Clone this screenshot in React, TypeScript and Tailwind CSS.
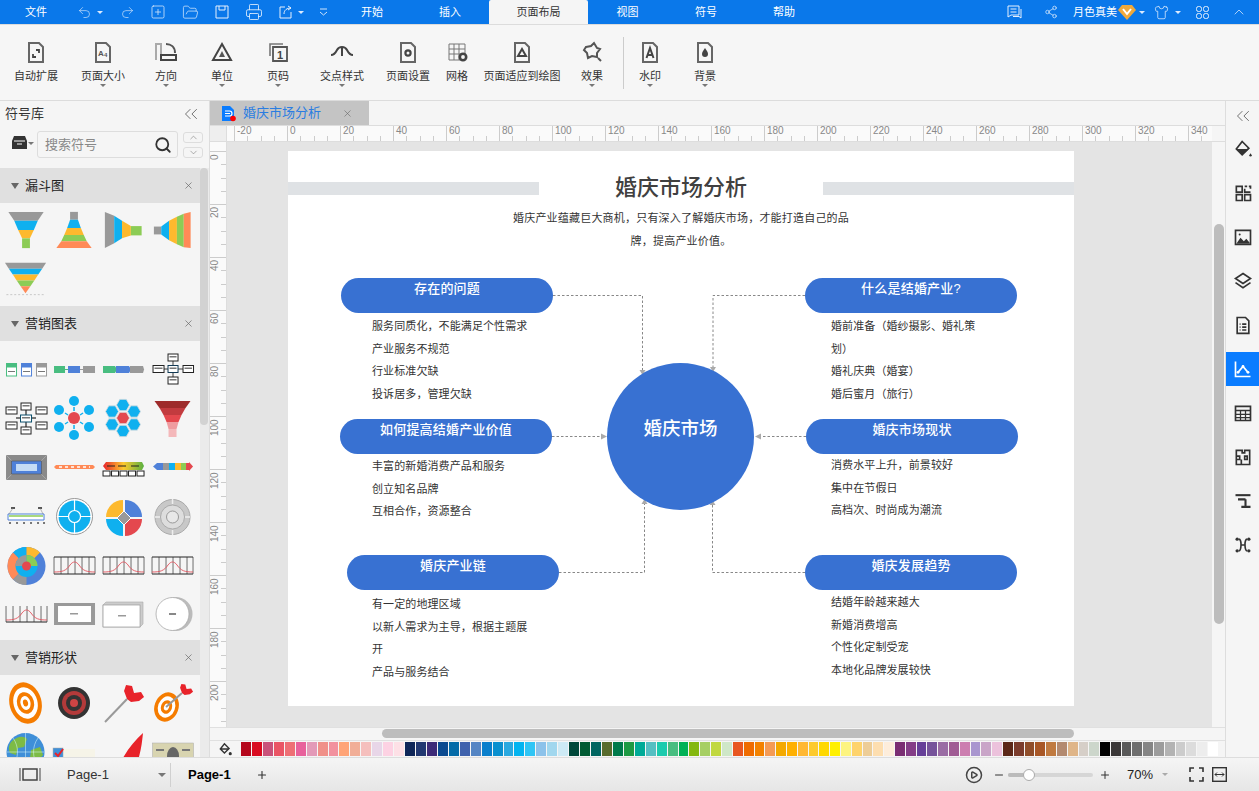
import { Fragment, type ReactNode } from "react";
import { ChevronDown, ChevronUp, ChevronsLeft, CirclePlay, FolderOpen, Minus, Plus, Printer, Redo2, Search, Share2, Shirt, SquarePlus, Undo2, X } from "lucide-react";

const swatches = [
  "bg-[#b5071c]", "bg-[#d90b20]", "bg-[#c9527a]", "bg-[#ea5565]", "bg-[#ee6f75]", "bg-[#e8619c]", "bg-[#e39ab8]", "bg-[#f09089]", "bg-[#f2919e]", "bg-[#ffa477]", "bg-[#f1ae97]", "bg-[#f5bfbd]", "bg-[#e8d6e8]", "bg-[#fdd2e3]", "bg-[#fde0e6]",
  "bg-[#0f2658]", "bg-[#223871]", "bg-[#3d2b78]", "bg-[#0b4a90]", "bg-[#046ba8]", "bg-[#3f62ad]", "bg-[#5585c4]", "bg-[#0a7fcc]", "bg-[#0a90cf]", "bg-[#2aa9e0]", "bg-[#03b4f0]", "bg-[#2fc5f5]", "bg-[#8cc2ea]", "bg-[#a1d7ee]", "bg-[#cdeaf5]",
  "bg-[#00483a]", "bg-[#005a33]", "bg-[#006560]", "bg-[#586b2d]", "bg-[#007a4b]", "bg-[#1e9a44]", "bg-[#00ab97]", "bg-[#55bfc2]", "bg-[#1ccbae]", "bg-[#48bd80]", "bg-[#00b156]", "bg-[#84b80f]", "bg-[#a6cf63]", "bg-[#c1d840]", "bg-[#cfe7c8]",
  "bg-[#e85721]", "bg-[#ef6c00]", "bg-[#f38200]", "bg-[#f49b55]", "bg-[#f4a900]", "bg-[#ffb000]", "bg-[#ffb833]", "bg-[#fdca2d]", "bg-[#ffd800]", "bg-[#fff000]", "bg-[#fdf480]", "bg-[#fed36c]", "bg-[#edcd97]", "bg-[#fddeb0]", "bg-[#fdeddb]",
  "bg-[#7a2e73]", "bg-[#843d87]", "bg-[#663f98]", "bg-[#76539a]", "bg-[#9a6ca4]", "bg-[#a05c94]", "bg-[#cc7eb0]", "bg-[#a996cf]", "bg-[#c9a5c8]", "bg-[#ecc2dc]",
  "bg-[#5c2818]", "bg-[#7b3c2c]", "bg-[#904e2a]", "bg-[#a85726]", "bg-[#c07a40]", "bg-[#b38a70]", "bg-[#dfb588]", "bg-[#d6cfc8]", "bg-[#ccd6cb]",
  "bg-[#000000]", "bg-[#3b3838]", "bg-[#595959]", "bg-[#6e6e6e]", "bg-[#858585]", "bg-[#9c9c9c]", "bg-[#b3b3b3]", "bg-[#cccccc]", "bg-[#dcdcdc]", "bg-[#ededed]", "bg-[#ffffff]",
];

const Caret = ({ className = "border-t-[#777]" }: { className?: string }) => (
  <span className={`block w-0 h-0 border-x-[3px] border-x-transparent border-t-[3px] ${className}`} />
);

/* ---------- ribbon icons ---------- */
const Ico = ({ children }: { children: ReactNode }) => (
  <svg width="24" height="24" viewBox="0 0 24 24" fill="none" stroke="#666" strokeWidth="2">{children}</svg>
);
const DOC = "M5 4h10l4 4v15H5z";

const ribbon: { label: string; w: string; caret?: boolean; icon: ReactNode }[] = [
  { label: "自动扩展", w: "w-[56px]", icon: <Ico><path d={DOC} /><path d="M9 15v3h3M15 14v-3h-3" strokeWidth="1.8" stroke="#444" /></Ico> },
  { label: "页面大小", w: "w-[78px]", caret: true, icon: <Ico><path d={DOC} /><text x="7" y="17" fontSize="8" fontWeight="700" fill="#555" stroke="none" fontFamily="Liberation Sans">A</text><text x="13" y="18" fontSize="6" fontWeight="700" fill="#555" stroke="none" fontFamily="Liberation Sans">4</text></Ico> },
  { label: "方向", w: "w-[48px]", caret: true, icon: <Ico><path d="M2 21V5h5v10" stroke="#aaa" /><path d="M12 5c5 0 9 3 9 9" stroke="#555" /><path d="M7 16h15v5H7z" stroke="#444" /></Ico> },
  { label: "单位", w: "w-[64px]", caret: true, icon: <Ico><path d="M12 5l9 16H3z" stroke="#444" /><path d="M12 12l3 6H9z" fill="#555" stroke="none" /></Ico> },
  { label: "页码", w: "w-[48px]", caret: true, icon: <Ico><path d="M4 17V5h13" stroke="#777" strokeWidth="1.6" /><path d="M7 8h14v14H7z" stroke="#555" strokeWidth="1.8" /><text x="11" y="20" fontSize="11" fontWeight="700" fill="#444" stroke="none" fontFamily="Liberation Sans">1</text></Ico> },
  { label: "交点样式", w: "w-[80px]", caret: true, icon: <Ico><path d="M1 16c3 0 5-3 6-5M23 16c-3 0-5-3-6-5M7 11c1-2 3-3 5-3s4 1 5 3" stroke="#444" /><path d="M12 8v9" stroke="#444" /></Ico> },
  { label: "页面设置", w: "w-[52px]", icon: <Ico><path d={DOC} /><circle cx="12" cy="14" r="2.6" stroke="#444" strokeWidth="2.2" /></Ico> },
  { label: "网格", w: "w-[46px]", icon: <Ico><path d="M4 5h16v16H4zM4 10h16M4 15h16M9 5v16M14 5v16" stroke="#777" strokeWidth="1" /><circle cx="18" cy="18" r="3.2" fill="#f5f5f5" stroke="#444" strokeWidth="2.6" /></Ico> },
  { label: "页面适应到绘图", w: "w-[84px]", icon: <Ico><path d={DOC} /><path d="M12 10l4 7H8z" stroke="#444" /></Ico> },
  { label: "效果", w: "w-[56px]", caret: true, icon: <Ico><path d="M6 8l5-1 3-3 3 5 3 1-3 4v4l-5-1-4 2-1-5-3-3z" stroke="#555" /><path d="M18 19l3 3" stroke="#555" /></Ico> },
];
const ribbon2: typeof ribbon = [
  { label: "水印", w: "w-[48px]", caret: true, icon: <Ico><path d={DOC} /><path d="M8.5 19L12 9l3.5 10M10 16h4" stroke="#444" /></Ico> },
  { label: "背景", w: "w-[62px]", caret: true, icon: <Ico><path d={DOC} /><path d="M12 9c2 3 3 4 3 6a3 3 0 0 1-6 0c0-2 1-3 3-6z" fill="#444" stroke="none" /></Ico> },
];

const RibbonItem = ({ label, w, caret, icon }: (typeof ribbon)[number]) => (
  <div className={`${w} shrink-0 flex flex-col items-center pt-[14px]`}>
    {icon}
    <span className="mt-[6px] text-[11px] leading-[14px] text-[#333] whitespace-nowrap">{label}</span>
    {caret && <span className="mt-[1px]"><Caret /></span>}
  </div>
);

/* ---------- symbol thumbnails, 48 x 48 ---------- */
const bell = (y: number, h: number, top = true) => (
  <g fill="none">
    {top && <path d={`M5 ${y}h41`} stroke="#222" strokeWidth="1" />}
    <path d={`M5 ${y + h}h41`} stroke="#222" strokeWidth="1" />
    <path d={`M5 ${y}v${h}M12 ${y}v${h}M19 ${y}v${h}M26 ${y}v${h}M33 ${y}v${h}M40 ${y}v${h}M46 ${y}v${h}`} stroke="#333" strokeWidth="0.7" />
    <path d={`M5 ${y + h - 2}c8 0 12-1 16-7 3-4 6-4 9 0 4 6 8 7 16 7`} stroke="#e2525c" strokeWidth="0.9" />
  </g>
);
const box = (x: number, y: number, w: number, h: number, s = "#222", f = "#fff") => (
  <g>
    <rect x={x} y={y} width={w} height={h} fill={f} stroke={s} strokeWidth="1" />
    <rect x={x + 1.5} y={y + 2} width={w - 3} height="1.5" fill="#777" />
  </g>
);

const funnels: ReactNode[] = [
  <><path d="M7 6h36l-6 9H13z" fill="#999" /><path d="M13 15h24l-4 9.5H17z" fill="#0fb0ef" /><path d="M17 24.5h16L29 33h-8z" fill="#fdb92e" /><path d="M21 33h8v10h-8z" fill="#8ccc55" /></>,
  <><path d="M21 6h8v8h-8z" fill="#999" /><path d="M21 14h8l3 8.5H18z" fill="#0fb0ef" /><path d="M18 22.5h14l3 7H15z" fill="#fdb92e" /><path d="M15 29.5h20l3 6.5H12z" fill="#8ccc55" /><path d="M12 36h26l5 7H7z" fill="#ff8a57" /></>,
  <><path d="M6.5 6L16 10v28l-9.5 5z" fill="#999" /><path d="M16 10l8 5v18l-8 5z" fill="#0fb0ef" /><path d="M24 15l9 5.500v9.500l-9 3z" fill="#fdb92e" /><path d="M33 20.500h11V30H33z" fill="#8ccc55" /></>,
  <><path d="M6.500 21H14v8H6.500z" fill="#999" /><path d="M14 21l8-6v20l-8-6z" fill="#0fb0ef" /><path d="M22 15l8-4v28l-8-4z" fill="#fdb92e" /><path d="M30 11l7-3v34l-7-3z" fill="#8ccc55" /><path d="M37 8l7-2v37l-7-1z" fill="#ff8a57" /></>,
  <><path d="M3.500 9h42l-4 6H7.500z" fill="#999" /><path d="M7.500 15h34l-4 6H11.500z" fill="#0fb0ef" /><path d="M11.500 21h26l-4 6H15.500z" fill="#fdb92e" /><path d="M15.500 27h18l-4 6h-10z" fill="#8ccc55" /><path d="M19.500 33h10L24.500 40z" fill="#ff8a57" /><path d="M5 41.500h38" stroke="#bbb" strokeWidth="0.8" strokeDasharray="2 2" /></>,
];

const hex = (cx: number, cy: number, r: number, f: string) => (
  <path d={`M${cx - r} ${cy}l${r / 2} ${-r * 0.87}h${r}l${r / 2} ${r * 0.87}l${-r / 2} ${r * 0.87}h${-r}z`} fill={f} stroke="#ddd" strokeWidth="0.8" />
);

const charts: ReactNode[] = [
  <>{[["5", "#48bd80"], ["20", "#4f81d9"], ["35", "#999"]].map(([x, c]) => <Fragment key={x}><rect x={+x} y="18" width="11" height="4" fill={c} /><rect x={+x + 0.5} y="22" width="10" height="9" fill="#fff" stroke={c} /><rect x={+x + 2} y="26" width="7" height="1" fill="#777" /></Fragment>)}</>,
  <><rect x="5" y="21" width="11" height="7" fill="#48bd80" /><path d="M16 24.500h3" stroke="#48bd80" /><rect x="19" y="21" width="12" height="7" fill="#4f81d9" /><path d="M31 24.500h3" stroke="#999" /><rect x="34" y="21" width="12" height="7" fill="#999" /></>,
  <><path d="M5 21h12l2 3.500-2 3.500H5z" fill="#48bd80" /><path d="M18 21h13l2 3.500-2 3.500H18z" fill="#4f81d9" /><path d="M32 21h13l1 3.500-1 3.500H32z" fill="#999" /></>,
  <><path d="M26 15v18M16 24h20" stroke="#999" strokeWidth="2" />{box(21, 9, 10, 7)}{box(6, 20.500, 11, 7)}{box(21, 20.500, 10, 7, "#123a55")}{box(36, 20.500, 10.500, 7)}{box(21, 32, 10, 7)}</>,
  <><path d="M25 16v18M15 24h20" stroke="#777" strokeWidth="2" />{box(20, 9, 10, 7)}{box(5, 13, 11, 7)}{box(35, 13, 11, 7)}{box(5, 28, 11, 7)}{box(35, 28, 11, 7)}{box(19.500, 21, 11, 7, "#0b4f6c")}{box(20, 33, 10, 7)}</>,
  <>{[[25, 7], [40, 16], [40, 33], [25, 41], [10, 33], [10, 16]].map(([x, y]) => <circle key={`${x}${y}`} cx={x} cy={y} r="5" fill="#0fb0ef" />)}<circle cx="25" cy="24" r="6" fill="#e4484e" /><path d="M25 13v4M34 19l-3 2M34 30l-3-2M25 35v-4M16 30l3-2M16 19l3 2" stroke="#0fb0ef" strokeWidth="1.5" /></>,
  <>{hex(25, 11, 6.500, "#0fb0ef")}{hex(36, 17.500, 6.500, "#0fb0ef")}{hex(36, 30.500, 6.500, "#0fb0ef")}{hex(25, 37, 6.500, "#0fb0ef")}{hex(14, 30.500, 6.500, "#0fb0ef")}{hex(14, 17.500, 6.500, "#0fb0ef")}{hex(25, 24, 6.500, "#e4484e")}</>,
  <><path d="M7.500 7h36l-5 7H12.500z" fill="#9e2b2b" /><path d="M12.500 14h26l-4 7H16.500z" fill="#c23b3f" /><path d="M16.500 21h18l-3 7H19.500z" fill="#e4484e" /><path d="M19.500 28h12l-2 7h-8z" fill="#ef9ca0" /><path d="M21.500 35h8v8h-8z" fill="#f4b8ba" /></>,
  <><rect x="5" y="12" width="41" height="25" fill="#8a8a8a" /><path d="M5 12l6 6M46 12l-6 6M5 37l6-6M46 37l-6-6" stroke="#bbb" strokeWidth="0.6" /><rect x="10.500" y="18" width="30" height="13" fill="#4f81d9" stroke="#555" strokeWidth="0.6" /><rect x="15" y="21" width="21" height="7" fill="#c5dcf5" /></>,
  <><path d="M5 24l2-2h37l2 2-2 2H7z" fill="#ff8a57" /><path d="M10 24h31" stroke="#fff" strokeWidth="1.5" strokeDasharray="3 3" /></>,
  <><defs><linearGradient id="rb"><stop offset="0" stopColor="#e8232a" /><stop offset=".5" stopColor="#fdc92e" /><stop offset="1" stopColor="#58b040" /></linearGradient></defs><path d="M5 23l3-4h36l2 4-2 4H8z" fill="url(#rb)" /><path d="M9 23h8M20 23h8M33 23h8" stroke="#222" strokeWidth="1" />{[5, 13.500, 22, 30.500, 39].map((x) => <rect key={x} x={x} y="28" width="7" height="5" fill="#fff" stroke="#222" />)}</>,
  <><path d="M6 23.500l4-3.500v7z" fill="#4f81d9" /><path d="M10 20h6v7h-6z" fill="#4f81d9" /><path d="M16 20h6v7h-6z" fill="#999" /><path d="M22 20h6v7h-6z" fill="#0fb0ef" /><path d="M28 20h6v7h-6z" fill="#fdb92e" /><path d="M34 20h5v7h-5z" fill="#8ccc55" /><path d="M39 20h3v-1l4 4.500-4 4.500v-1h-3z" fill="#e4484e" /></>,
  <><path d="M7 22h36v6H7z" fill="#fff" stroke="#4f81d9" /><path d="M8 24h34" stroke="#8ccc55" strokeWidth="1.500" /><path d="M10 16h4M37 16h4" stroke="#222" strokeWidth="1.500" /><path d="M12 16l-4 6M39 16l3 6" stroke="#777" strokeWidth="0.5" /><path d="M8 31h2M15 31h2M22 31h2M29 31h2M36 31h2M42 31h2" stroke="#777" strokeWidth="2" /></>,
  <><circle cx="25.500" cy="24.500" r="18" fill="#fff" stroke="#999" strokeWidth="1" /><circle cx="25.500" cy="24.500" r="16" fill="#0fb0ef" /><path d="M25.500 8v33M9 24.500h33" stroke="#fff" strokeWidth="1.200" /><circle cx="25.500" cy="24.500" r="6" fill="#0fb0ef" stroke="#fff" strokeWidth="1.200" /></>,
  <><path d="M25 25V8a17 17 0 0 0-17 17z" fill="#fdb92e" /><path d="M27 25V8a17 17 0 0 1 17 17z" fill="#4f81d9" /><path d="M25 27v17A17 17 0 0 1 8 27z" fill="#0fb0ef" /><path d="M27 27v17a17 17 0 0 0 17-17z" fill="#e4484e" /><path d="M26 19l7 7-7 7-7-7z" fill="#999" stroke="#fff" /></>,
  <><circle cx="25.500" cy="25" r="17.500" fill="#c8c8c8" stroke="#aaa" /><circle cx="25.500" cy="25" r="12" fill="#ddd" stroke="#aaa" /><circle cx="25.500" cy="25" r="6" fill="#e8e8e8" stroke="#999" /><path d="M25.500 7v5M25.500 38v5M8 25h5M38 25h5" stroke="#eee" strokeWidth="1.500" /></>,
  <><circle cx="25.500" cy="25" r="19" fill="#4f81d9" /><path d="M25.500 25L12 11.500A19 19 0 0 1 25.500 6z" fill="#0fb0ef" /><path d="M25.500 25V6a19 19 0 0 1 13.500 5.500z" fill="#fdb92e" /><path d="M25.500 25L6.500 25A19 19 0 0 1 12 11.500z" fill="#ff8a57" /><path d="M25.500 25L12 38.500A19 19 0 0 1 6.500 25z" fill="#ff8a57" /><path d="M25.500 25V44A19 19 0 0 1 12 38.500z" fill="#999" /><circle cx="25.500" cy="25" r="11" fill="#0fb0ef" /><path d="M25.500 25V14a11 11 0 0 0-11 11z" fill="#999" /><path d="M25.500 25V14a11 11 0 0 1 11 11z" fill="#8ccc55" /><circle cx="25.500" cy="25" r="4.500" fill="#e4484e" /></>,
  bell(16, 17), bell(16, 17), bell(16, 17), bell(16, 16, false),
  <><rect x="5" y="13" width="41" height="22" fill="#999" /><rect x="9" y="16" width="33" height="16" fill="#fff" /><rect x="21" y="23" width="8" height="1.500" fill="#999" /></>,
  <><path d="M5 15l3-3h37v22l-3 3H5z" fill="#ccc" stroke="#aaa" strokeWidth="0.6" /><rect x="5" y="15" width="37" height="22" fill="#fff" stroke="#999" strokeWidth="0.7" /><rect x="20" y="25" width="8" height="1.500" fill="#999" /></>,
  <><circle cx="28.500" cy="24" r="17" fill="#bbb" /><circle cx="25.500" cy="24" r="16.500" fill="#fff" stroke="#aaa" strokeWidth="0.8" /><rect x="22" y="23" width="7" height="2" fill="#888" /></>,
];

const dart = (tx: number, ty: number, ex: number, ey: number, s = 1) => (
  <g>
    <path d={`M${tx} ${ty}L${ex} ${ey}`} stroke="#999" strokeWidth="2" />
    <path transform={`translate(${ex} ${ey}) scale(${s})`} d="M0 0l-3-8 2-6 6 1 2 7 7-1 3 5-5 4-8 1z" fill="#e8232a" />
  </g>
);
const shapes: ReactNode[] = [
  <g transform="rotate(-15 24.500 24)"><ellipse cx="24.500" cy="24" rx="16" ry="21" fill="#f57c00" /><ellipse cx="24.500" cy="24" rx="12" ry="16" fill="#fff" /><ellipse cx="24.500" cy="24" rx="8.500" ry="11" fill="#f57c00" /><ellipse cx="24.500" cy="24" rx="5" ry="7" fill="#fff" /><ellipse cx="24.500" cy="24" rx="2.500" ry="3.500" fill="#f57c00" /></g>,
  <><circle cx="25" cy="24" r="16" fill="#333" /><circle cx="25" cy="24" r="12" fill="#b33a3a" /><circle cx="25" cy="24" r="8" fill="#333" /><circle cx="25" cy="24" r="4" fill="#c44" /></>,
  dart(7, 43, 29, 20),
  <><g transform="rotate(20 19.500 28)"><ellipse cx="19.500" cy="28" rx="12" ry="15" fill="#f57c00" /><ellipse cx="19.500" cy="28" rx="8.500" ry="11" fill="#fff" /><ellipse cx="19.500" cy="28" rx="5.500" ry="7" fill="#f57c00" /><ellipse cx="19.500" cy="28" rx="2.500" ry="3.500" fill="#fff" /></g>{dart(19, 28, 35, 14, 0.65)}</>,
  <><circle cx="24.500" cy="24" r="19" fill="#3f8fd8" /><path d="M10 14c5-5 12-7 16-3l-3 8-6 1-2 7-6-2c-2-4-1-8 1-11zM30 22l9-3 3 8-8 9-5-6z" fill="#7dbb45" /><path d="M6 24h37M24.500 5v38M12 10c6 8 6 20 0 28M37 10c-6 8-6 20 0 28" stroke="#dff" strokeWidth="0.5" fill="none" /></>,
  <><rect x="9" y="21" width="37" height="20" fill="#f6f4e8" /><rect x="4" y="20" width="10" height="12" fill="#3f8fd8" stroke="#aaa" strokeWidth="0.5" /><path d="M6 25l3 3 5-7" stroke="#e8232a" strokeWidth="2" fill="none" /></>,
  <path d="M9 38l9-8 3 8c6-14 15-25 24-33-1 9-2 20-7 33l-14 14z" fill="#e8232a" />,
  <><rect x="5.500" y="15" width="41" height="30" fill="#d8d4b0" stroke="#aaa" strokeWidth="0.5" /><ellipse cx="26" cy="28" rx="6" ry="9" fill="#666" /><path d="M9 22h8M35 22h8M9 30h8M35 30h8" stroke="#777" strokeWidth="2" /></>,
];

const Thumb = ({ children }: { children: ReactNode }) => (
  <svg className="w-full h-full" viewBox="0 0 48.700 49" fill="none">{children}</svg>
);
const ThumbGrid = ({ items, rows }: { items: ReactNode[]; rows: string }) => (
  <div className={`grid grid-cols-4 w-[195px] ml-[0.5px] ${rows}`}>
    {items.map((item, i) => <Thumb key={i}>{item}</Thumb>)}
  </div>
);

const SectionHeader = ({ title }: { title: string }) => (
  <div className="h-[35px] shrink-0 bg-[#e0e0e0] flex items-center pl-[11px] pr-[6px] text-[13px] text-[#222]">
    <span className="block w-0 h-0 border-x-[4px] border-x-transparent border-t-[6px] border-t-[#666]" />
    <span className="ml-[6px]">{title}</span>
    <X className="ml-auto" size={11} strokeWidth={1.5} color="#666" />
  </div>
);

/* ---------- rulers ---------- */
const hLabels = Array.from({ length: 19 }, (_, i) => -20 + i * 20);
const vLabels = Array.from({ length: 11 }, (_, i) => i * 20);

const HRuler = () => (
  <div className="flex-1 h-full flex overflow-hidden bg-[#fafafa] border-l border-[#ddd] pl-[7px]">
    {hLabels.map((n) => (
      <div key={n} className="w-[53px] shrink-0 h-full border-l border-[#ccc] flex flex-col justify-between">
        <span className="pl-[2px] text-[10px] leading-[10px] text-[#888]">{n}</span>
        <div className="flex h-[6px]">
          <span className="flex-1" /><span className="flex-1 border-l border-[#ccc]" /><span className="flex-1 border-l border-[#ccc]" /><span className="flex-1 border-l border-[#ccc]" />
        </div>
      </div>
    ))}
  </div>
);

const VRuler = () => (
  <div className="w-[17px] shrink-0 h-full overflow-hidden bg-[#fafafa] border-r border-[#ddd] pt-[9px]">
    {vLabels.map((n) => (
      <div key={n} className="h-[53px] border-t border-[#ccc] flex justify-between">
        <span className="[writing-mode:vertical-rl] rotate-180 text-[10px] leading-[10px] pl-px pb-[2px] text-right text-[#888] h-[20px]">{n}</span>
        <div className="flex flex-col w-[7px]">
          <span className="flex-1" /><span className="flex-1 border-t border-[#ccc]" /><span className="flex-1 border-t border-[#ccc]" /><span className="flex-1 border-t border-[#ccc]" />
        </div>
      </div>
    ))}
  </div>
);

/* ---------- diagram ---------- */
const nodes = [
  { title: "存在的问题", x: "left-[53px]", y: "top-[127px]", pad: "mt-[2px] pl-[31px]", lines: ["服务同质化，不能满足个性需求", "产业服务不规范", "行业标准欠缺", "投诉居多，管理欠缺"] },
  { title: "什么是结婚产业?", x: "left-[517px]", y: "top-[127px]", pad: "mt-[2px] pl-[26px]", lines: ["婚前准备（婚纱摄影、婚礼策", "划）", "婚礼庆典（婚宴）", "婚后蜜月（旅行）"] },
  { title: "如何提高结婚产业价值", x: "left-[52px]", y: "top-[268px]", pad: "mt-px pl-[32px]", lines: ["丰富的新婚消费产品和服务", "创立知名品牌", "互相合作，资源整合"] },
  { title: "婚庆市场现状", x: "left-[518px]", y: "top-[268px]", pad: "pl-[25px]", lines: ["消费水平上升，前景较好", "集中在节假日", "高档次、时尚成为潮流"] },
  { title: "婚庆产业链", x: "left-[59px]", y: "top-[404px]", pad: "mt-[3px] pl-[25px]", lines: ["有一定的地理区域", "以新人需求为主导，根据主题展", "开", "产品与服务结合"] },
  { title: "婚庆发展趋势", x: "left-[517px]", y: "top-[404px]", pad: "mt-px pl-[26px]", lines: ["结婚年龄越来越大", "新婚消费增高", "个性化定制受宠", "本地化品牌发展较快"] },
];

const Diagram = () => (
  <div className="relative w-[786px] h-[555px] ml-[61px] mt-[9px] bg-white">
    <div className="flex items-center pt-[20px] h-[54px]">
      <div className="w-[251px] h-[13px] bg-[#dfe2e5]" />
      <h1 className="w-[284px] text-center text-[22px] leading-[30px] font-medium text-[#404040]">婚庆市场分析</h1>
      <div className="w-[251px] h-[13px] bg-[#dfe2e5]" />
    </div>
    <p className="mt-[2px] text-center text-[11px] leading-[23px] tracking-[0.2px] text-[#333]">
      婚庆产业蕴藏巨大商机，只有深入了解婚庆市场，才能打造自己的品
      <br />
      牌，提高产业价值。
    </p>
    <svg className="absolute inset-0" width="786" height="555" fill="none" stroke="#888" strokeDasharray="2.5 2">
      <path d="M265 144.500H354.500V220" />
      <path d="M517 144.500H425V218" />
      <path d="M264 285.500H314" />
      <path d="M518 285.500H472" />
      <path d="M271 421.500H356.500V353" />
      <path d="M517 421.500H424.500V354" />
      <g fill="#aaa" stroke="none">
        <path d="M351.500 219l3 5 3-5z" />
        <path d="M422 216l3 5 3-5z" />
        <path d="M313 282.500l6 3-6 3z" />
        <path d="M473 282.500l-6 3 6 3z" />
        <path d="M353.500 353l3-5 3 5z" />
        <path d="M421.500 354l3-5 3 5z" />
      </g>
    </svg>
    <div className="absolute left-[319px] top-[212px] w-[147px] h-[147px] rounded-full bg-[#3871d2] flex items-center justify-center pb-[16px] text-[18.500px] font-medium text-white">婚庆市场</div>
    {nodes.map((n) => (
      <div key={n.title} className={`absolute w-[212px] ${n.x} ${n.y}`}>
        <div className="h-[35px] rounded-full bg-[#3871d2] text-center text-[13px] leading-[22px] tracking-[0.2px] font-medium text-white">{n.title}</div>
        <div className={n.pad}>
          {n.lines.map((l) => <div key={l} className="text-[11px] leading-[22.500px] tracking-[0.1px] text-[#333] whitespace-nowrap">{l}</div>)}
        </div>
      </div>
    ))}
  </div>
);

/* ---------- right panel ---------- */
const sideIcons: ReactNode[] = [
  <><path d="M11 3l8 8-8 8-7-7z" fill="none" /><path d="M4 12h15l-8 7z" fill="#333" stroke="none" /><path d="M21 17l1.500 2.500a1.500 1.500 0 1 1-3 0z" fill="#333" stroke="none" /></>,
  <path d="M4 4h7v7H4zM14 4h3M19 4h2v3M4 14h7v7H4zM14 14h7v7h-7zM14 7v4h7" fill="none" />,
  <><path d="M3 4h18v17H3z" fill="none" /><path d="M4 20l5-7 4 4 3-3 4 5v1z" fill="#333" stroke="none" /><circle cx="8" cy="9" r="1.200" fill="#333" stroke="none" /></>,
  <path d="M12 3l9 6-9 6-9-6zM3 14l9 6 9-6" fill="none" />,
  <path d="M5 3h10l4 4v15H5zM8 11h1M11 11h5M8 14.500h1M11 14.500h5M8 18h1M11 18h5" fill="none" />,
  <><path d="M3 3v18h18" fill="none" stroke="#fff" /><path d="M6 16l6-7 6 7" fill="none" stroke="#fff" /><circle cx="6" cy="16" r="1.700" fill="#fff" stroke="none" /><circle cx="12" cy="9" r="1.700" fill="#fff" stroke="none" /><circle cx="18" cy="16" r="1.700" fill="#fff" stroke="none" /></>,
  <><path d="M3 4h18v17H3zM3 9h18" fill="none" /><path d="M3 13.500h18M3 17.500h18M9 9v12M15 9v12" fill="none" strokeWidth="1.500" /></>,
  <path d="M4 4h7v3h3V4h6v17H4zM4 11h4v4H4M14 11h3v4h-3zM10 21v-6" fill="none" />,
  <><path d="M3 5h18" strokeWidth="2.500" fill="none" /><path d="M6 10h9M15 10v8M10 19h11" fill="none" strokeWidth="2.500" /></>,
  <><path d="M7 5c4 0 3 14 0 14M17 5c-4 0-3 14 0 14M9 12h6" fill="none" /><circle cx="5" cy="5" r="2" fill="#333" stroke="none" /><circle cx="19" cy="5" r="2" fill="#333" stroke="none" /><circle cx="5" cy="19" r="2" fill="#333" stroke="none" /><circle cx="19" cy="19" r="2" fill="#333" stroke="none" /></>,
];

export default function App() {
  return (
    <div className="w-[1259px] h-[791px] overflow-hidden flex flex-col bg-[#f5f5f5] font-['Liberation_Sans','Noto_Sans_CJK_SC',sans-serif]">
      {/* title bar with menu tabs */}
      <header className="h-[24px] shrink-0 bg-[#0a78ea] flex items-center text-white text-[11px]">
        <span className="ml-[25px] w-[22px]">文件</span>
        <Undo2 className="ml-[30px]" size={15} strokeWidth={1.1} color="#cfe4fb" />
        <span className="ml-[5px]"><Caret className="border-t-[#dbeafe]" /></span>
        <Redo2 className="ml-[17px]" size={15} strokeWidth={1.1} color="#cfe4fb" />
        <SquarePlus className="ml-[15px]" size={16} strokeWidth={1.1} color="#e6f0fd" />
        <FolderOpen className="ml-[16px]" size={17} strokeWidth={1.1} color="#cfe4fb" />
        <svg className="ml-[16px]" width="14" height="14" viewBox="0 0 14 14" fill="none" stroke="#e6f0fd"><path d="M1 1h12v12H1zM4 1v4h6V1" /></svg>
        <Printer className="ml-[16px]" size={18} strokeWidth={1.1} color="#e6f0fd" />
        <svg className="ml-[16px]" width="13" height="14" viewBox="0 0 13 14" fill="none" stroke="#e6f0fd"><path d="M6 2H1v11h11V7M5 9c0-4 3-6 7-6M9 1l3 2-3 2" /></svg>
        <span className="ml-[6px]"><Caret className="border-t-[#dbeafe]" /></span>
        <svg className="ml-[15px]" width="9" height="9" viewBox="0 0 9 9" fill="none" stroke="#cfe4fb"><path d="M1 1h7M1 4l3.500 3L8 4" /></svg>
        <nav className="ml-[5px] flex h-full">
          <span className="w-[78px] flex items-center justify-center">开始</span>
          <span className="w-[78px] flex items-center justify-center">插入</span>
          <span className="w-[99px] flex items-center justify-center bg-[#f5f5f5] text-[#333] rounded-t-[2px]">页面布局</span>
          <span className="w-[79px] flex items-center justify-center">视图</span>
          <span className="w-[78px] flex items-center justify-center">符号</span>
          <span className="w-[78px] flex items-center justify-center">帮助</span>
        </nav>
        <div className="ml-auto flex items-center pr-[12px]">
          <svg width="15" height="14" viewBox="0 0 15 14" fill="none" stroke="#e6f0fd"><path d="M1 1h11v9H4l-3 2zM3.500 4h6M3.500 7h6M14 4v9l-2-1.500H6" /></svg>
          <Share2 className="ml-[22px]" size={14} strokeWidth={1.2} color="#e6f0fd" />
          <span className="ml-[15px] w-[44px] whitespace-nowrap">月色真美</span>
          <svg className="ml-[1px]" width="18" height="16" viewBox="0 0 18 16"><path d="M4 1h10l4 5-9 10L0 6z" fill="#f0a93b" /><path d="M5 5l4 5 4-5" fill="none" stroke="#fff" strokeWidth="2" /></svg>
          <span className="ml-[3px]"><Caret className="border-t-[#dbeafe]" /></span>
          <Shirt className="ml-[9px]" size={15} strokeWidth={1.2} color="#e6f0fd" />
          <span className="ml-[6px]"><Caret className="border-t-[#dbeafe]" /></span>
          <svg className="ml-[15px]" width="13" height="13" viewBox="0 0 13 13" fill="none" stroke="#e6f0fd"><rect x="0.500" y="0.500" width="5" height="5" rx="2" /><rect x="7.500" y="0.500" width="5" height="5" rx="2" /><rect x="0.500" y="7.500" width="5" height="5" rx="2" /><rect x="7.500" y="7.500" width="5" height="5" rx="2" /></svg>
          <ChevronUp className="ml-[22px]" size={16} strokeWidth={1.1} color="#e6f0fd" />
        </div>
      </header>

      {/* ribbon */}
      <div className="h-[77px] shrink-0 flex pl-[8px] bg-[#f6f6f6] border-t border-b border-[#dcdcdc]">
        {ribbon.map((item) => <RibbonItem key={item.label} {...item} />)}
        <div className="w-px h-[52px] mt-[12px] ml-[3px] mr-[2px] bg-[#ccc]" />
        {ribbon2.map((item) => <RibbonItem key={item.label} {...item} />)}
      </div>

      <div className="flex-1 flex min-h-0">
        {/* symbol library */}
        <aside className="w-[210px] shrink-0 flex flex-col border-r border-[#ddd] overflow-hidden">
          <div className="h-[26px] shrink-0 flex items-center pl-[5px] pr-[7px] text-[13px] text-[#333]">
            符号库
            <ChevronsLeft className="ml-auto" size={22} strokeWidth={1} color="#666" />
          </div>
          <div className="h-[41px] shrink-0 flex items-start pl-[12px]">
            <div className="flex items-center gap-[1px] mt-[9px]">
              <svg width="15" height="14" viewBox="0 0 15 14"><path d="M2 0h11l2 5v8H0V5z" fill="#333" /><path d="M2 5h11M5 8h5" stroke="#fff" /></svg>
              <Caret />
            </div>
            <div className="ml-[3px] mt-[4px] w-[141px] h-[27px] border border-[#ddd] rounded-[3px] flex items-center pl-[7px] pr-[5px] text-[13px] text-[#888]">
              搜索符号
              <Search className="ml-auto" size={18} strokeWidth={2.4} color="#333" />
            </div>
            <div className="ml-[5px] mt-[5px] flex flex-col gap-[4px]">
              <span className="w-[20px] h-[11px] border border-[#ddd] rounded-[3px] flex items-center justify-center"><ChevronUp size={11} strokeWidth={1} color="#555" /></span>
              <span className="w-[20px] h-[11px] border border-[#ddd] rounded-[3px] flex items-center justify-center"><ChevronDown size={11} strokeWidth={1} color="#555" /></span>
            </div>
          </div>
          <div className="flex-1 flex min-h-0">
            <div className="w-[200px] shrink-0 flex flex-col overflow-hidden bg-[#f5f5f5]">
              <SectionHeader title="漏斗图" />
              <div className="h-[103px] shrink-0 pt-[3px]"><ThumbGrid items={funnels} rows="auto-rows-[48px]" /></div>
              <SectionHeader title="营销图表" />
              <div className="h-[299px] shrink-0 pt-[4px]"><ThumbGrid items={charts} rows="auto-rows-[49px]" /></div>
              <SectionHeader title="营销形状" />
              <div className="pt-[4px]"><ThumbGrid items={shapes} rows="auto-rows-[49px]" /></div>
            </div>
            <div className="flex-1 bg-[#ebebeb]"><div className="w-[8px] h-[257px] rounded-[4px] bg-[#d2d2d2]" /></div>
          </div>
        </aside>

        {/* document area */}
        <main className="flex-1 min-w-0 flex flex-col">
          <div className="h-[25px] shrink-0 border-b border-[#ddd] flex">
            <div className="w-[159px] bg-[#c4c4c4] flex items-center pl-[12px]">
              <svg width="14" height="17" viewBox="0 0 14 17">
                <path d="M0 1h8l4 4v11H0z" fill="#0a7cff" />
                <path d="M3 6h4.500a2.500 2.500 0 0 1 0 5H3M3 8.500h5" fill="none" stroke="#fff" strokeWidth="1.200" />
                <circle cx="11" cy="13.500" r="2.800" fill="#f00" />
              </svg>
              <span className="ml-[7px] text-[13px] text-[#2a7de1]">婚庆市场分析</span>
              <X className="ml-[21px]" size={11} strokeWidth={1.3} color="#666" />
            </div>
          </div>
          <div className="h-[16px] shrink-0 flex border-b border-[#ddd]">
            <div className="w-[16px] bg-[#eeeeee]" />
            <HRuler />
            <div className="w-[13px] shrink-0" />
          </div>
          <div className="h-[585px] shrink-0 flex">
            <VRuler />
            <div className="flex-1 min-w-0 overflow-hidden bg-[#e4e4e4]"><Diagram /></div>
            <div className="w-[13px] shrink-0 pl-[2px] pt-[82px]"><div className="w-[10px] h-[400px] rounded-[5px] bg-[#bdbdbd]" /></div>
          </div>
          <div className="h-[13px] shrink-0 border-t border-[#e0e0e0] pt-[1px] pl-[172px]"><div className="w-[692px] h-[9px] rounded-[5px] bg-[#bdbdbd]" /></div>
          <div className="h-[17px] shrink-0 flex items-center pl-[8px] border-t border-[#e0e0e0]">
            <svg width="14" height="14" viewBox="0 0 24 24" fill="none" stroke="#333" strokeWidth="2.400"><path d="M11 3l8 8-8 8-7-7zM4 12h15" /><circle cx="21" cy="20" r="1.500" fill="#333" /></svg>
            <div className="ml-[9px] w-[491px] flex gap-px">
              {swatches.slice(0, 45).map((c, i) => <span key={i} className={`flex-1 h-[14px] ${c}`} />)}
            </div>
            <div className="ml-px w-[485px] flex gap-px">
              {swatches.slice(45).map((c, i) => <span key={i} className={`flex-1 h-[14px] ${c}`} />)}
            </div>
          </div>
        </main>

        {/* right tool strip */}
        <aside className="w-[34px] shrink-0 flex flex-col items-center border-l border-[#ddd] bg-[#f5f5f5]">
          <div className="h-[30px] flex items-center"><ChevronsLeft size={22} strokeWidth={1} color="#666" /></div>
          {sideIcons.map((icon, i) => (
            <div key={i} className={`w-full h-[34px] flex items-center justify-center ${i > 0 ? "mt-[10px]" : "mt-[1px]"} ${i === 5 ? "bg-[#0a7cff]" : ""}`}>
              <svg width="20" height="20" viewBox="0 0 24 24" stroke="#333" strokeWidth="2">{icon}</svg>
            </div>
          ))}
        </aside>
      </div>

      {/* status bar */}
      <footer className="h-[34px] shrink-0 flex items-center bg-gradient-to-b from-[#f5f5f5] to-[#e6e6e6] border-t border-[#ddd] text-[13px] text-[#333]">
        <svg className="ml-[19px]" width="22" height="13" viewBox="0 0 22 13" fill="none" stroke="#444"><path d="M1 0v13M21 0v13" /><rect x="4" y="1" width="14" height="11" strokeWidth="1.500" /></svg>
        <span className="ml-[26px] w-[43px]">Page-1</span>
        <span className="ml-[48px]"><span className="block w-0 h-0 border-x-[4px] border-x-transparent border-t-[4px] border-t-[#777]" /></span>
        <span className="ml-[4px] w-px h-[24px] bg-[#d0d0d0]" />
        <span className="ml-[17px] w-[45px] font-bold text-black">Page-1</span>
        <Plus className="ml-[23px]" size={12} strokeWidth={2.2} color="#333" />
        <CirclePlay className="ml-[697px]" size={18} strokeWidth={2} color="#444" />
        <Minus className="ml-[10px]" size={12} strokeWidth={2} color="#333" />
        <div className="ml-[3px] w-[85px] h-[4px] rounded-full bg-[#d6d6d6] flex items-center">
          <div className="w-[15px] h-full rounded-l-full bg-[#bbb]" />
          <span className="w-[12px] h-[12px] rounded-full bg-white border border-[#aaa]" />
        </div>
        <Plus className="ml-[6px]" size={12} strokeWidth={2} color="#333" />
        <span className="ml-[16px] w-[29px] text-[#222]">70%</span>
        <span className="ml-[6px]"><Caret className="border-t-[#aaa]" /></span>
        <svg className="ml-[21px]" width="15" height="15" viewBox="0 0 15 15" fill="none" stroke="#333" strokeWidth="1.600"><path d="M1 5V1h4M10 1h4v4M14 10v4h-4M5 14H1v-4" /></svg>
        <svg className="ml-[8px]" width="15" height="15" viewBox="0 0 15 15" fill="none" stroke="#333" strokeWidth="1.400"><rect x="0.700" y="0.700" width="13.600" height="13.600" /><path d="M3 7.500h9M5 5.500l-2 2 2 2M10 5.500l2 2-2 2" strokeWidth="1" /></svg>
      </footer>
    </div>
  );
}
